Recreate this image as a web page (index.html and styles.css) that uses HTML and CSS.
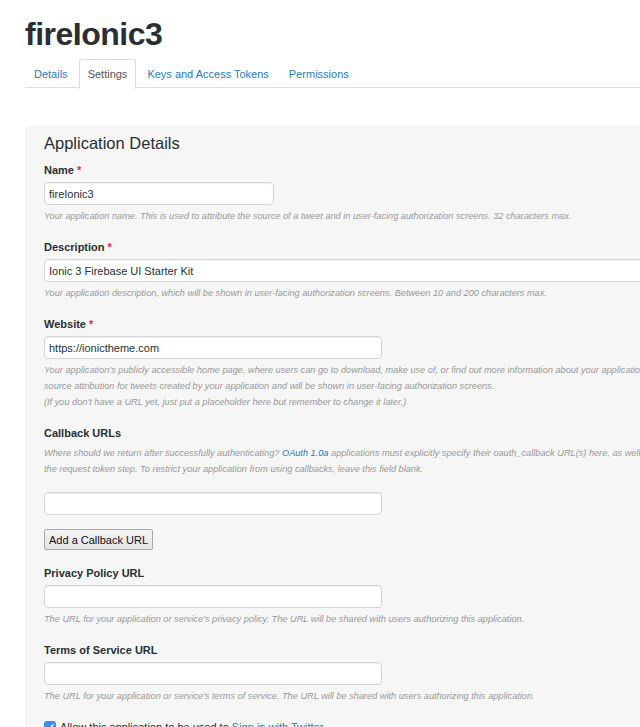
FILE: index.html
```html
<!DOCTYPE html>
<html lang="en">
<head>
<meta charset="utf-8">
<title>fireIonic3 - Settings</title>
<link rel="stylesheet" href="styles.css">
</head>
<body>
<div class="page">
  <h1 class="app-title">fireIonic3</h1>
  <ul class="tabs">
    <li class="tab"><a href="#">Details</a></li>
    <li class="tab active"><a href="#">Settings</a></li>
    <li class="tab"><a href="#">Keys and Access Tokens</a></li>
    <li class="tab"><a href="#">Permissions</a></li>
  </ul>

  <div class="panel">
    <h2 class="panel-title">Application Details</h2>

    <div class="field">
      <label class="label">Name <span class="req">*</span></label>
      <input class="input w-name" type="text" value="fireIonic3">
      <p class="help">Your application name. This is used to attribute the source of a tweet and in user-facing authorization screens. 32 characters max.</p>
    </div>

    <div class="field">
      <label class="label">Description <span class="req">*</span></label>
      <input class="input w-wide" type="text" value="Ionic 3 Firebase UI Starter Kit">
      <p class="help">Your application description, which will be shown in user-facing authorization screens. Between 10 and 200 characters max.</p>
    </div>

    <div class="field">
      <label class="label">Website <span class="req">*</span></label>
      <input class="input w-url" type="text" value="https://ionictheme.com">
      <p class="help">
        <span class="line">Your application's publicly accessible home page, where users can go to download, make use of, or find out more information about your application. This fully-qualified URL is used in the</span>
        <span class="line">source attribution for tweets created by your application and will be shown in user-facing authorization screens.</span>
        <span class="line">(If you don't have a URL yet, just put a placeholder here but remember to change it later.)</span>
      </p>
    </div>

    <div class="field">
      <label class="label">Callback URLs</label>
      <p class="help help-top">
        <span class="line">Where should we return after successfully authenticating? <a class="link" href="#">OAuth 1.0a</a> applications must explicitly specify their oauth_callback URL(s) here, as well as in</span>
        <span class="line">the request token step. To restrict your application from using callbacks, leave this field blank.</span>
      </p>
      <input class="input w-url callback-input" type="text" value="">
      <button class="btn" type="button">Add a Callback URL</button>
    </div>

    <div class="field">
      <label class="label">Privacy Policy URL</label>
      <input class="input w-url" type="text" value="">
      <p class="help">The URL for your application or service's privacy policy. The URL will be shared with users authorizing this application.</p>
    </div>

    <div class="field">
      <label class="label">Terms of Service URL</label>
      <input class="input w-url" type="text" value="">
      <p class="help">The URL for your application or service's terms of service. The URL will be shared with users authorizing this application.</p>
    </div>

    <div class="check-row">
      <span class="checkbox"><svg width="12" height="12" viewBox="0 0 12 12"><path d="M3 6.2 L5.2 8.4 L9.2 3.6" fill="none" stroke="#fff" stroke-width="1.6"/></svg></span>
      <span class="check-text">Allow this application to be used to <a class="link" href="#">Sign in with Twitter</a></span>
    </div>
  </div>
</div>
</body>
</html>
```

FILE: styles.css
```css
html, body {
  margin: 0;
  padding: 0;
  overflow: hidden;
  background: #fff;
}

body {
  font-family: "Liberation Sans", Arial, sans-serif;
  color: #292f33;
}

.page {
  width: 760px;
  padding-left: 25px;
}

.app-title {
  margin: 15px 0 6px;
  font-size: 32px;
  line-height: 38px;
  font-weight: bold;
  letter-spacing: -0.5px;
  color: #292f33;
}

.tabs {
  list-style: none;
  margin: 0;
  padding: 0;
  display: flex;
  border-bottom: 1px solid #dddddd;
  height: 28px;
}

.tab {
  margin-right: 2px;
  margin-bottom: -1px;
}

.tab a {
  display: block;
  padding: 6px 8px;
  font-size: 11px;
  line-height: 16px;
  color: #2b7bb9;
  text-decoration: none;
  border: 1px solid transparent;
  border-radius: 3px 3px 0 0;
}

.tab.active a {
  color: #555;
  background: #fff;
  border-color: #dddddd;
  border-bottom-color: #fff;
}

.panel {
  margin-top: 38px;
  background: #f6f6f6;
  padding: 7px 19px 20px;
  border-radius: 3px 0 0 0;
}

.panel-title {
  margin: 0 0 9px;
  font-size: 16.5px;
  line-height: 20px;
  font-weight: normal;
  color: #292f33;
}

.field {
  margin-bottom: 15px;
}

.label {
  display: block;
  font-size: 11px;
  line-height: 16px;
  font-weight: bold;
  color: #292f33;
  margin-bottom: 4px;
}

.req {
  color: #e0245e;
}

.input {
  display: block;
  box-sizing: border-box;
  height: 23px;
  margin: 0;
  padding: 0 4px;
  font-family: "Liberation Sans", Arial, sans-serif;
  font-size: 11px;
  color: #292f33;
  background: #fff;
  border: 1px solid #d6d6d6;
  border-radius: 4px;
  box-shadow: inset 0 1px 1px rgba(0, 0, 0, 0.06);
}

.w-name { width: 230px; }
.w-wide { width: 640px; }
.w-url { width: 338px; }

.help {
  margin: 3px 0 0;
  font-size: 9.2px;
  line-height: 16px;
  font-style: italic;
  color: #999;
  white-space: nowrap;
}

.help .line {
  display: block;
}

.help-top {
  margin-top: 3px;
}

.link {
  color: #2b7bb9;
  text-decoration: none;
}

.callback-input {
  margin-top: 15px;
}

.btn {
  display: block;
  margin-top: 14px;
  height: 21px;
  padding: 0 4px;
  font-family: "Liberation Sans", Arial, sans-serif;
  font-size: 11px;
  color: #111;
  background: linear-gradient(#f4f4f4, #e4e4e4);
  border: 1px solid #a9a9a9;
  border-radius: 2px;
}

.check-row {
  display: flex;
  align-items: center;
  gap: 4px;
  margin-top: 15px;
  height: 16px;
}

.checkbox {
  display: flex;
  align-items: center;
  justify-content: center;
  width: 12px;
  height: 12px;
  border-radius: 3px;
  background: #3b8def;
}

.check-text {
  font-size: 11px;
  color: #292f33;
}
```
